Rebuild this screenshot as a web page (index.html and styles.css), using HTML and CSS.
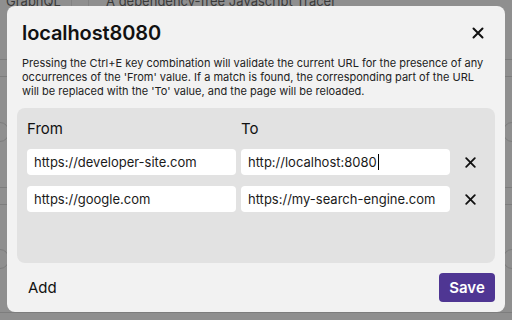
FILE: index.html
```html
<!DOCTYPE html>
<html>
<head>
<meta charset="utf-8">
<link rel="stylesheet" href="styles.css">
</head>
<body>
<div class="page">
  <div class="bg-row bg-top">
    <span class="bg-name">GraphQL</span>
    <span class="bg-sep"></span>
    <span class="bg-desc">A dependency-free Javascript Tracer</span>
  </div>
  <div class="bg-row bg-thin"></div>
  <div class="bg-row bg-tall"><span class="knob"></span><span class="knob"></span></div>
  <div class="bg-row bg-thin"></div>
  <div class="bg-row bg-tall2"><span class="knob"></span><span class="knob"></span></div>
</div>

<div class="dialog">
  <div class="header">
    <h1 class="title">localhost8080</h1>
    <svg class="close" width="12" height="12" viewBox="0 0 12 12"><path d="M1.5 1.5L10.5 10.5M10.5 1.5L1.5 10.5" stroke="#111" stroke-width="2" stroke-linecap="round"/></svg>
  </div>
  <p class="desc">Pressing the Ctrl+E key combination will validate the current URL for the presence of any occurrences of the 'From' value. If a match is found, the corresponding part of the URL will be replaced with the 'To' value, and the page will be reloaded.</p>
  <div class="panel">
    <div class="grid">
      <div class="label">From</div>
      <div class="label">To</div>
      <div></div>
      <div class="field">https://developer-site.com</div>
      <div class="field">http://localhost:8080<span class="caret"></span></div>
      <div class="remove"><svg width="11" height="11" viewBox="0 0 11 11"><path d="M1.2 1.2L9.8 9.8M9.8 1.2L1.2 9.8" stroke="#111" stroke-width="1.8" stroke-linecap="round"/></svg></div>
      <div class="field">https://google.com</div>
      <div class="field">https://my-search-engine.com</div>
      <div class="remove"><svg width="11" height="11" viewBox="0 0 11 11"><path d="M1.2 1.2L9.8 9.8M9.8 1.2L1.2 9.8" stroke="#111" stroke-width="1.8" stroke-linecap="round"/></svg></div>
    </div>
  </div>
  <div class="footer">
    <span class="add">Add</span>
    <button class="save">Save</button>
  </div>
</div>
</body>
</html>
```

FILE: styles.css
```css
html, body {
  margin: 0;
  padding: 0;
}
body {
  width: 512px;
  height: 320px;
  overflow: hidden;
  background: #8f8f8f;
  font-family: Inter, "Noto Sans", "Liberation Sans", sans-serif;
  position: relative;
}
.page {
  display: flex;
  flex-direction: column;
  color: #3a3a3a;
}
.bg-row {
  border-bottom: 1px solid #7d7d7d;
  display: flex;
  align-items: center;
  justify-content: space-between;
}
.bg-top {
  align-items: flex-start;
  justify-content: flex-start;
  font-size: 13px;
  line-height: 14px;
  margin-top: -6px;
  height: 65px;
}
.bg-name {
  width: 72px;
  padding-left: 6px;
  box-sizing: border-box;
  border-right: 1px solid #828282;
  height: 18px;
}
.bg-sep {
  width: 16px;
  border-right: 1px solid #828282;
  height: 18px;
}
.bg-desc {
  padding-left: 17px;
}
.bg-thin {
  height: 16px;
}
.bg-tall {
  height: 110px;
}
.bg-tall2 {
  height: 107px;
}
.knob {
  width: 16px;
  height: 18px;
  border: 1px solid #7d7d7d;
  border-radius: 9px;
  margin: 0 -9px;
}
.dialog {
  position: absolute;
  left: 7px;
  top: 6px;
  width: 498px;
  height: 306px;
  box-sizing: border-box;
  background: #f2f2f2;
  border-radius: 8px;
  padding: 14px 10px 10px 10px;
  display: flex;
  flex-direction: column;
  color: #111;
}
.header {
  display: flex;
  align-items: center;
  justify-content: space-between;
  padding: 0 11px 0 5px;
  height: 26px;
}
.title {
  margin: 0;
  font-size: 20px;
  font-weight: 600;
  line-height: 26px;
  letter-spacing: -0.1px;
}
.close {
  display: block;
}
.desc {
  margin: 10px 4px 0 5px;
  font-size: 11px;
  line-height: 14px;
  color: #222;
}
.panel {
  margin-top: 10px;
  background: #e2e2e2;
  border-radius: 8px;
  height: 155px;
  box-sizing: border-box;
  padding: 11px 10px 10px 10px;
}
.grid {
  display: grid;
  grid-template-columns: 209px 209px 1fr;
  column-gap: 5px;
  row-gap: 11px;
  align-items: center;
}
.label {
  font-size: 15px;
  line-height: 20px;
  margin-bottom: -1px;
  color: #111;
}
.field {
  background: #fff;
  border-radius: 4px;
  height: 26px;
  line-height: 26px;
  padding: 0 7px;
  font-size: 13px;
  color: #1a1a1a;
  white-space: nowrap;
  display: flex;
  align-items: center;
}
.caret {
  display: inline-block;
  width: 1px;
  height: 16px;
  background: #000;
  margin-left: 1px;
}
.remove {
  display: flex;
  justify-content: center;
}
.remove svg {
  display: block;
}
.footer {
  margin-top: auto;
  display: flex;
  align-items: center;
  justify-content: space-between;
  padding-left: 11px;
}
.add {
  font-size: 15px;
  color: #111;
}
.save {
  width: 56px;
  height: 29px;
  border: none;
  border-radius: 4px;
  background: #4f3693;
  color: #fff;
  font-family: inherit;
  font-size: 15px;
  font-weight: 600;
  padding: 0;
}
```
